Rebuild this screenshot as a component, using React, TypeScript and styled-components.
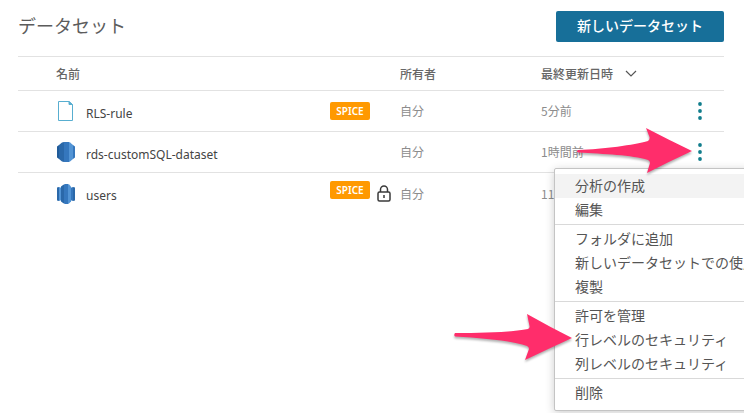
import React from "react";
import styled, { createGlobalStyle } from "styled-components";

const GlobalStyle = createGlobalStyle`
  *, *::before, *::after { box-sizing: border-box; }
  body {
    margin: 0;
    background: #fff;
    color: #444;
    font-family: "Noto Sans", "Noto Sans CJK JP", sans-serif;
    overflow: hidden;
  }
  button { font-family: inherit; cursor: pointer; }
`;

const Page = styled.main`
  min-height: 100vh;
  padding: 11px 20px 0 18px;
`;

const Header = styled.header`
  display: flex;
  justify-content: space-between;
  align-items: center;
  height: 31px;
  margin-bottom: 14px;
`;

const Title = styled.h1`
  margin: 0;
  padding-bottom: 4px;
  font: 400 18px/26px "Noto Sans CJK JP", sans-serif;
  color: #5c5c5c;
`;

const PrimaryButton = styled.button`
  height: 31px;
  padding: 0 21px 2px;
  border: 0;
  border-radius: 2px;
  background: #176f99;
  color: #fff;
  font: 500 14px/29px "Noto Sans CJK JP", sans-serif;
`;

const Table = styled.table`
  width: 100%;
  table-layout: fixed;
  border-collapse: separate;
  border-spacing: 0;
  border-top: 1px solid #e2e2e2;
  text-align: left;
`;

const Col = styled.col<{ $width?: number }>`
  width: ${(p) => (p.$width ? `${p.$width}px` : "auto")};
`;

const HeadCell = styled.th<{ $indent?: boolean }>`
  height: 34px;
  padding: 0 0 0 ${(p) => (p.$indent ? "38px" : "0")};
  border-bottom: 1px solid #e2e2e2;
  font: 500 12px/18px "Noto Sans CJK JP", sans-serif;
  color: #666;
`;

const SortButton = styled.button`
  display: flex;
  align-items: center;
  gap: 12px;
  padding: 0;
  border: 0;
  background: none;
  color: inherit;
  font: inherit;
`;

const Row = styled.tr`
  &:not(:last-child) > td { border-bottom: 1px solid #e2e2e2; }
`;

const Cell = styled.td`
  height: 41px;
  padding: 0;
  vertical-align: middle;
  white-space: nowrap;
  font: 400 12px/18px "Noto Sans CJK JP", sans-serif;
  color: #8c8c8c;
`;

const IconCell = styled(Cell)`
  padding-right: 11px;
  svg { display: block; margin-left: auto; }
`;

const NameCell = styled(Cell)`
  padding-top: 5px;
  font-family: "Noto Sans", sans-serif;
  color: #444;
`;

const Badges = styled.div<{ $raised?: boolean }>`
  display: flex;
  align-items: flex-end;
  gap: 7px;
  padding-bottom: ${(p) => (p.$raised ? "4px" : "0")};
`;

const SpiceBadge = styled.span<{ $raised?: boolean }>`
  width: 40px;
  height: 18px;
  margin-bottom: ${(p) => (p.$raised ? "3px" : "0")};
  border-radius: 2px;
  background: #ff9900;
  color: #fff;
  font: 600 10px/19px "Noto Sans", sans-serif;
  text-align: center;
`;

const ActionAnchor = styled.div`
  position: relative;
`;

const MoreButton = styled.button`
  display: flex;
  align-items: center;
  justify-content: center;
  width: 38px;
  height: 24px;
  padding: 0;
  border: 0;
  background: none;
`;

const Menu = styled.div`
  position: absolute;
  z-index: 1;
  top: 28px;
  left: -127px;
  width: 220px;
  padding: 5px 0;
  border: 1px solid #c4c4c4;
  border-radius: 2px;
  background: #fff;
  box-shadow: 0 2px 10px rgba(0, 0, 0, 0.2);
`;

const MenuGroup = styled.div`
  & + & {
    margin-top: 2px;
    padding-top: 2px;
    border-top: 1px solid #d9d9d9;
  }
`;

const MenuItem = styled.button<{ $active?: boolean }>`
  position: relative;
  display: block;
  width: 100%;
  height: 24px;
  padding: 0 20px 2px;
  border: 0;
  background: ${(p) => (p.$active ? "#f3f3f3" : "transparent")};
  color: #555;
  font: 400 14px/22px "Noto Sans CJK JP", sans-serif;
  text-align: left;
  white-space: nowrap;
`;

const Pointer = styled.svg<{ $top: number; $left: number }>`
  position: absolute;
  z-index: 2;
  top: ${(p) => p.$top}px;
  left: ${(p) => p.$left}px;
  pointer-events: none;
  filter: drop-shadow(0 2px 1px rgba(0, 0, 0, 0.3));
`;

const levelArrow =
  "M4 24C30 23 60 19 74 15Q76 14 75.500 11L72 2Q95 14 118 25Q94 36 73 47L76 37Q76 35 74 34C58 29 30 28 4 26.500Q2 25 4 24Z";
const tiltedArrow =
  "M1 21C30 21 60 20 74 17Q76 16 75.500 14L73 2Q96 15 118 26Q94 37 71 48L75 37Q75 35 73 34C58 29 30 26 1 24.500Q-.5 23 1 21Z";

const Arrow = ({ top, left, shape }: { top: number; left: number; shape: string }) => (
  <Pointer $top={top} $left={left} width="120" height="50" viewBox="0 0 120 50" aria-hidden="true">
    <path fill="#ff2d6b" d={shape} />
  </Pointer>
);

const FileIcon = () => (
  <svg width="18" height="20" viewBox="0 0 18 20" fill="none" stroke="#58aed0" aria-hidden="true">
    <path d="M1.500 .5h10.500L15.500 4v15.500h-14z" />
    <path d="M12 .5V3.500h3.500z" fill="#58aed0" />
  </svg>
);

const DatabaseIcon = () => (
  <svg width="18" height="20" viewBox="0 0 18 20" aria-hidden="true">
    <path fill="#205b99" d="M0 4.500L2 3v14l-2-1.500z" />
    <path fill="#2a68a9" d="M2 3l3-2.500L7 0v20l-2-.5L2 17z" />
    <path fill="#3577bd" d="M7 0h5v20H7z" />
    <path fill="#5294d5" d="M12 0l1 .5L16 3v14l-3 2.500-1 .5z" />
    <path fill="#3577bd" d="M16 3l2 1.500v11L16 17z" />
  </svg>
);

const ClusterIcon = () => (
  <svg width="18" height="20" viewBox="0 0 18 20" aria-hidden="true">
    <path fill="#2a68a9" d="M0 3.500L2 3v14l-2-.5z" />
    <path fill="#5294d5" d="M2 3l3 1v12l-3 1z" />
    <path fill="#3577bd" d="M13 4l3-1v14l-3-1z" />
    <path fill="#2a68a9" d="M16 3l2 .5v13l-2 .5z" />
    <path fill="#2a68a9" d="M4 2.500L6 1l1-.5v19L6 19l-2-1.500z" />
    <path fill="#3577bd" d="M7 .5L8 0h3v20H8l-1-.5z" />
    <path fill="#5294d5" d="M11 0l1 .5 2 2v15l-2 2-1 .5z" />
  </svg>
);

const LockIcon = () => (
  <svg width="14" height="17" viewBox="0 0 14 17" fill="none" stroke="#3a3a3a" strokeWidth="1.500" role="img" aria-label="制限あり">
    <rect x="1" y="7" width="12" height="9" rx="1.500" />
    <path d="M3.500 7V4.500a3.500 3.500 0 0 1 7 0V7M7 10v3" />
  </svg>
);

const DotsIcon = () => (
  <svg width="4" height="18" viewBox="0 0 4 18" fill="#117d8c" aria-hidden="true">
    <circle cx="2" cy="2" r="1.900" />
    <circle cx="2" cy="9" r="1.900" />
    <circle cx="2" cy="16" r="1.900" />
  </svg>
);

const ChevronIcon = () => (
  <svg width="12" height="7" viewBox="0 0 12 7" fill="none" stroke="#555" strokeWidth="1.200" aria-hidden="true">
    <path d="M1 1l5 5 5-5" />
  </svg>
);

const datasets = [
  { name: "RLS-rule", icon: <FileIcon />, spice: true, locked: false, updated: "5分前", open: false },
  { name: "rds-customSQL-dataset", icon: <DatabaseIcon />, spice: false, locked: false, updated: "1時間前", open: true },
  { name: "users", icon: <ClusterIcon />, spice: true, locked: true, updated: "11時間前", open: false },
];

const menuGroups = [
  ["分析の作成", "編集"],
  ["フォルダに追加", "新しいデータセットでの使用", "複製"],
  ["許可を管理", "行レベルのセキュリティ", "列レベルのセキュリティ"],
  ["削除"],
];

const DatasetMenu = () => (
  <Menu role="menu">
    {menuGroups.map((items) => (
      <MenuGroup key={items[0]} role="group">
        {items.map((label) => (
          <MenuItem key={label} role="menuitem" $active={label === "分析の作成"}>
            {label}
            {label === "行レベルのセキュリティ" && <Arrow top={-16} left={-101} shape={tiltedArrow} />}
          </MenuItem>
        ))}
      </MenuGroup>
    ))}
  </Menu>
);

export default function App() {
  return (
    <Page>
      <GlobalStyle />
      <Header>
        <Title>データセット</Title>
        <PrimaryButton>新しいデータセット</PrimaryButton>
      </Header>
      <Table>
        <colgroup>
          <Col $width={68} />
          <Col />
          <Col $width={70} />
          <Col $width={141} />
          <Col $width={140} />
          <Col $width={43} />
        </colgroup>
        <thead>
          <tr>
            <HeadCell colSpan={3} $indent>名前</HeadCell>
            <HeadCell>所有者</HeadCell>
            <HeadCell aria-sort="descending">
              <SortButton>
                最終更新日時
                <ChevronIcon />
              </SortButton>
            </HeadCell>
            <HeadCell />
          </tr>
        </thead>
        <tbody>
          {datasets.map((d) => (
            <Row key={d.name}>
              <IconCell>{d.icon}</IconCell>
              <NameCell>{d.name}</NameCell>
              <Cell>
                <Badges $raised={d.locked}>
                  {d.spice && <SpiceBadge $raised={d.locked}>SPICE</SpiceBadge>}
                  {d.locked && <LockIcon />}
                </Badges>
              </Cell>
              <Cell>自分</Cell>
              <Cell>{d.updated}</Cell>
              <Cell>
                <ActionAnchor>
                  <MoreButton aria-label={`${d.name} の操作`} aria-expanded={d.open}>
                    <DotsIcon />
                  </MoreButton>
                  {d.open && <DatasetMenu />}
                  {d.open && <Arrow top={-14} left={-107} shape={levelArrow} />}
                </ActionAnchor>
              </Cell>
            </Row>
          ))}
        </tbody>
      </Table>
    </Page>
  );
}
